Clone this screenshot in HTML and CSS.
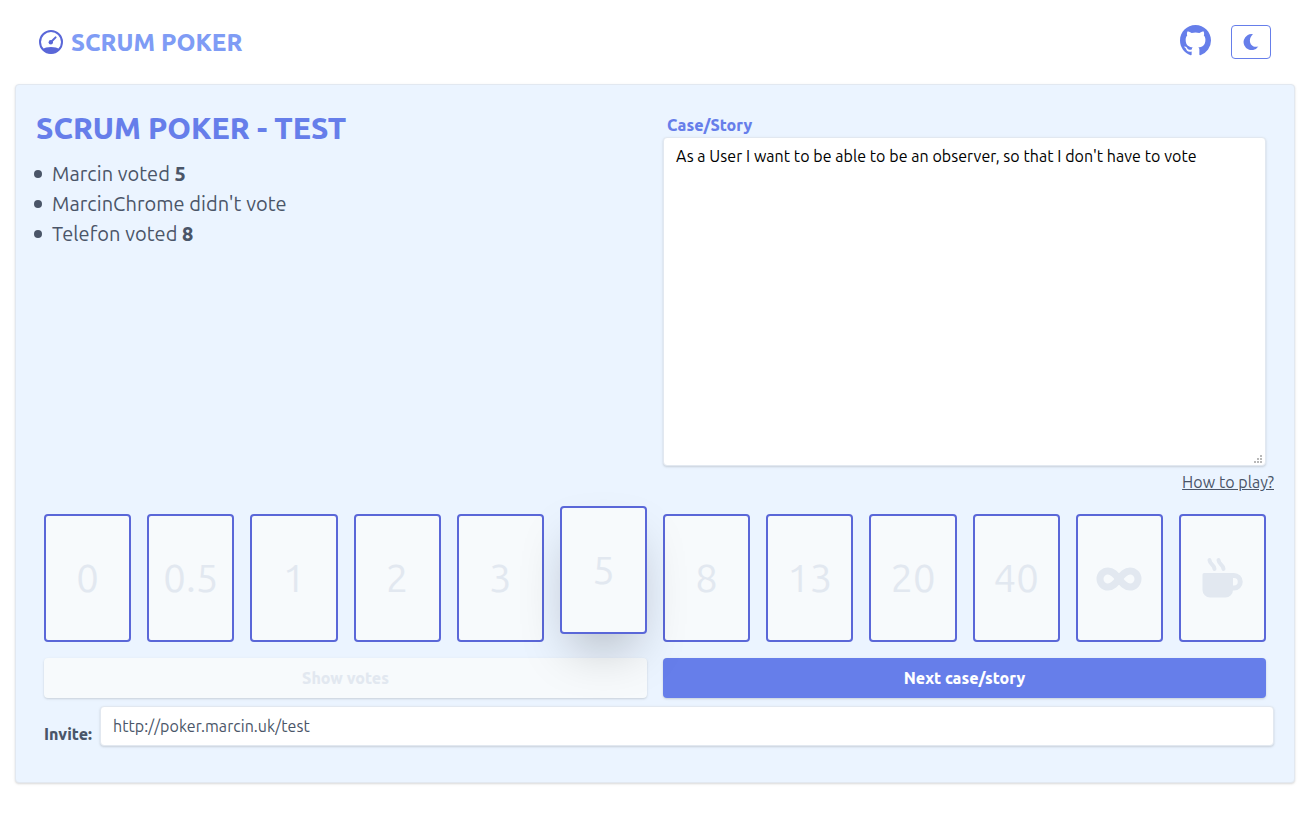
FILE: index.html
```html
<!DOCTYPE html>
<html lang="en">
<head>
<meta charset="utf-8">
<title>Scrum Poker</title>
<link rel="stylesheet" href="styles.css">
</head>
<body>
<header class="header">
  <a class="brand">
    <svg class="brand-icon" viewBox="0 0 24 24"><circle cx="12" cy="12" r="11" fill="none" stroke="currentColor" stroke-width="2"/><path fill="currentColor" d="M3.500 19.300C5.500 17.800 8.500 17 12 17s6.500.8 8.500 2.300C18.500 22 15.500 23.500 12 23.500S5.500 22 3.500 19.300z"/><circle cx="11.800" cy="12.300" r="2.200" fill="currentColor"/><path d="M12 12L16.600 7.400" stroke="currentColor" stroke-width="2" stroke-linecap="round"/></svg>
    <span class="brand-name">SCRUM POKER</span>
  </a>
  <div class="actions">
    <svg class="github" viewBox="0 0 16 16"><path fill="currentColor" d="M8 0C3.58 0 0 3.58 0 8c0 3.54 2.29 6.53 5.47 7.59.4.07.55-.17.55-.38 0-.19-.01-.82-.01-1.49-2.01.37-2.53-.49-2.69-.94-.09-.23-.48-.94-.82-1.13-.28-.15-.68-.52-.01-.53.63-.01 1.08.58 1.23.82.72 1.21 1.87.87 2.33.66.07-.52.28-.87.51-1.07-1.78-.2-3.64-.89-3.64-3.95 0-.87.31-1.59.82-2.15-.08-.2-.36-1.02.08-2.12 0 0 .67-.21 2.2.82.64-.18 1.32-.27 2-.27s1.36.09 2 .27c1.53-1.04 2.2-.82 2.2-.82.44 1.1.16 1.92.08 2.12.51.56.82 1.27.82 2.15 0 3.07-1.87 3.75-3.65 3.95.29.25.54.73.54 1.48 0 1.07-.01 1.93-.01 2.2 0 .21.15.46.55.38A8.01 8.01 0 0 0 16 8c0-4.42-3.58-8-8-8z"/></svg>
    <button class="theme" aria-label="Dark mode"><svg class="moon" viewBox="0 0 16 16"><path fill="currentColor" d="M10 .2A8 8 0 1 0 15.300 12.400C10.500 14 6.800 10.600 6.900 6.500 7 3.800 8.200 1.600 10 .2z"/></svg></button>
  </div>
</header>
<main class="panel">
  <section class="top">
    <div class="votes">
      <h1 class="title">SCRUM POKER - TEST</h1>
      <ul class="vote-list">
        <li class="vote">Marcin voted <b>5</b></li>
        <li class="vote">MarcinChrome didn't vote</li>
        <li class="vote">Telefon voted <b>8</b></li>
      </ul>
    </div>
    <div class="story">
      <label class="story-label" for="story">Case/Story</label>
      <div class="story-field">
        <textarea class="story-input" id="story" spellcheck="false">As a User I want to be able to be an observer, so that I don't have to vote</textarea>
        <svg class="grip" viewBox="0 0 8 8"><path fill="#b8b8b8" d="M6 0h2v2H6zM3 3h2v2H3zM6 3h2v2H6zM0 6h2v2H0zM3 6h2v2H3zM6 6h2v2H6z"/></svg>
      </div>
    </div>
  </section>
  <div class="help"><a class="help-link">How to play?</a></div>
  <section class="cards">
    <div class="card">0</div>
    <div class="card">0.5</div>
    <div class="card">1</div>
    <div class="card">2</div>
    <div class="card">3</div>
    <div class="card selected">5</div>
    <div class="card">8</div>
    <div class="card">13</div>
    <div class="card">20</div>
    <div class="card">40</div>
    <div class="card"><svg class="infinity" viewBox="0 0 46 24"><path fill="none" stroke="currentColor" stroke-width="7" d="M23 12C19.500 7.500 16.500 4 12 4a8 8 0 0 0 0 16C16.500 20 19.500 16.500 23 12S29.500 4 34 4a8 8 0 0 1 0 16C29.500 20 26.500 16.500 23 12z"/></svg></div>
    <div class="card"><svg class="cup" viewBox="0 0 42 42"><path fill="currentColor" d="M2 16H31V33a7.500 7.500 0 0 1-7.500 7.500H8A7.500 7.500 0 0 1 .5 33V17.500A1.500 1.500 0 0 1 2 16z"/><path fill="none" stroke="currentColor" stroke-width="5" d="M29 18.500h3a6.200 6.200 0 0 1 0 12.500h-3"/><path fill="none" stroke="currentColor" stroke-width="4" stroke-linecap="round" d="M7.500 3C8 8 12 7 12.500 12M16.500 3C17 8 21 7 21.500 12"/></svg></div>
  </section>
  <section class="buttons">
    <button class="btn disabled">Show votes</button>
    <button class="btn primary">Next case/story</button>
  </section>
  <section class="invite">
    <label class="invite-label" for="invite">Invite:</label>
    <input class="invite-input" id="invite" value="http://poker.marcin.uk/test" readonly>
  </section>
</main>
</body>
</html>
```
FILE: styles.css
```css
*, *::before, *::after { box-sizing: border-box; }

body {
  margin: 0;
  height: 818px;
  overflow: hidden;
  background: #fff;
  color: #4a5568;
  font: 450 16px/24px Ubuntu, "Noto Sans", sans-serif;
  letter-spacing: 0.05px;
}

svg { display: block; flex: none; }

button, input, textarea { margin: 0; font: inherit; letter-spacing: inherit; }

b { font-weight: 800; }

.header {
  display: flex;
  justify-content: space-between;
  align-items: center;
  height: 84px;
  padding: 0 39px;
}

.brand { display: flex; align-items: center; gap: 8px; color: #5a67d8; }
.brand-icon { width: 24px; height: 24px; }
.brand-name {
  padding-top: 1px;
  color: #7f9cf5;
  font-size: 24px;
  font-weight: 760;
  line-height: 36px;
}

.actions { display: flex; align-items: center; gap: 20px; color: #667eea; }
.github { width: 31px; height: 31px; margin-bottom: 3px; }
.theme {
  display: grid;
  place-items: center;
  width: 40px;
  height: 34px;
  padding: 0;
  border: 1px solid #667eea;
  border-radius: 4px;
  background: #fff;
  color: #667eea;
}
.moon { width: 16px; height: 16px; }

.panel {
  height: 699px;
  margin: 0 15px;
  padding: 20px;
  border: 1px solid #e2e8f0;
  border-radius: 4px;
  background: #ebf4ff;
  box-shadow: 0 1px 3px rgba(0, 0, 0, .1), 0 1px 2px rgba(0, 0, 0, .06);
}

.top {
  display: grid;
  grid-template-columns: 1fr 603px;
  padding-right: 8px;
  height: 361px;
}
.votes { padding-top: 1px; }
.title {
  margin: 0 0 8px;
  color: #667eea;
  font-size: 30px;
  font-weight: 800;
  line-height: 45px;
  letter-spacing: 0;
}
.vote-list { margin: 0; padding: 0; list-style: none; }
.vote {
  display: flex;
  align-items: center;
  white-space: pre;
  font-size: 20px;
  line-height: 30px;
}
.vote::before {
  content: "";
  width: 8px;
  height: 8px;
  margin: 0 10px 0 -2px;
  border-radius: 50%;
  background: #4a5568;
}

.story { display: flex; flex-direction: column; padding-top: 8px; }
.story-label {
  padding-left: 4px;
  color: #667eea;
  font-weight: 800;
  letter-spacing: 0;
}
.story-field { position: relative; height: 329px; }
.story-input {
  display: block;
  width: 100%;
  height: 100%;
  padding: 6px 12px;
  border: 1px solid #e2e8f0;
  border-radius: 4px;
  background: #fff;
  box-shadow: 0 1px 3px rgba(0, 0, 0, .1), 0 1px 2px rgba(0, 0, 0, .06);
  color: #000;
  resize: none;
  outline: 0;
}
.grip { position: absolute; right: 4px; bottom: 3px; width: 8px; height: 8px; }

.help { display: flex; justify-content: flex-end; height: 48px; padding-top: 4px; }
.help-link { text-decoration: underline; }

.cards {
  display: grid;
  grid-template-columns: repeat(12, minmax(0, 1fr));
  gap: 16px;
  padding: 0 7.9px 0 8.1px;
}
.card {
  display: flex;
  align-items: center;
  justify-content: center;
  height: 128px;
  border: 2px solid #5a67d8;
  border-radius: 4px;
  background: #f7fafc;
  color: #e2e8f0;
  font-size: 40px;
  line-height: 60px;
}
.selected {
  transform: translateY(-8px);
  box-shadow: 0 25px 50px -12px rgba(0, 0, 0, .25);
}
.infinity { width: 46px; height: 24px; margin-top: 1px; }
.cup { width: 42px; height: 42px; }

.buttons {
  display: grid;
  grid-template-columns: 1fr 1fr;
  gap: 16px;
  padding: 16px 8px 0;
}
.btn {
  height: 40px;
  padding: 0;
  border: 0;
  border-radius: 4px;
  box-shadow: 0 1px 3px rgba(0, 0, 0, .1), 0 1px 2px rgba(0, 0, 0, .06);
  font-weight: 800;
  letter-spacing: 0;
}
.disabled { background: #f7fafc; color: #e2e8f0; }
.primary { background: #667eea; color: #fff; }

.invite { display: flex; padding: 8px 0 0 8px; }
.invite-label { width: 56px; padding-top: 16px; font-weight: 800; }
.invite-input {
  flex: 1;
  min-width: 0;
  height: 40px;
  padding: 0 12px;
  border: 1px solid #e2e8f0;
  border-radius: 4px;
  background: #fff;
  box-shadow: 0 1px 3px rgba(0, 0, 0, .1), 0 1px 2px rgba(0, 0, 0, .06);
  color: #4a5568;
  outline: 0;
}
```
